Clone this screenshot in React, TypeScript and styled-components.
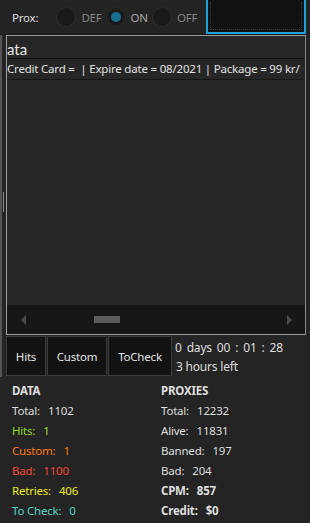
import React from 'react'
import styled, { createGlobalStyle } from 'styled-components'

const GlobalStyle = createGlobalStyle`
  html, body {
    margin: 0;
    padding: 0;
    background: #242424;
  }
  body {
    font-family: 'Noto Sans', 'Open Sans', sans-serif;
    letter-spacing: -0.2px;
    color: #dcdcdc;
  }
`

type Stat = { label: string; value: string; color?: string; bold?: boolean }

const dataStats: Stat[] = [
  { label: 'Total:', value: '1102' },
  { label: 'Hits:', value: '1', color: '#8fdc2a' },
  { label: 'Custom:', value: '1', color: '#ff7a14' },
  { label: 'Bad:', value: '1100', color: '#f2493a' },
  { label: 'Retries:', value: '406', color: '#eaea1c' },
  { label: 'To Check:', value: '0', color: '#52d6c2' },
]

const proxyStats: Stat[] = [
  { label: 'Total:', value: '12232' },
  { label: 'Alive:', value: '11831' },
  { label: 'Banned:', value: '197' },
  { label: 'Bad:', value: '204' },
  { label: 'CPM:', value: '857', bold: true },
  { label: 'Credit:', value: '$0', bold: true },
]

const radios = [
  { label: 'DEF', checked: false },
  { label: 'ON', checked: true },
  { label: 'OFF', checked: false },
]

const App: React.FC = () => {
  const renderStats = (title: string, stats: Stat[]) => (
    <StatColumn>
      <StatTitle>{title}</StatTitle>
      {stats.map((s) => (
        <StatRow key={s.label} color={s.color} $bold={s.bold}>
          <span>{s.label}</span>
          <span>{s.value}</span>
        </StatRow>
      ))}
    </StatColumn>
  )

  return (
    <Window>
      <GlobalStyle />
      <TopBar>
        <ProxLabel>Prox:</ProxLabel>
        <RadioGroup>
          {radios.map((r) => (
            <Radio key={r.label} $checked={r.checked}>
              <RadioCircle $checked={r.checked} />
              <span>{r.label}</span>
            </Radio>
          ))}
        </RadioGroup>
        <FocusBox>
          <FocusDots />
        </FocusBox>
      </TopBar>

      <Middle>
        <Splitter>
          <SplitterHandle />
        </Splitter>
        <MainColumn>
          <ListBox>
            <ListHeader>ata</ListHeader>
            <ListRow>Credit Card =&nbsp; | Expire date = 08/2021 | Package = 99 kr/</ListRow>
            <ListBody />
            <HScroll>
              <ArrowLeft />
              <Thumb />
              <ArrowRight />
            </HScroll>
          </ListBox>
          <ButtonRow>
            <TabButton $w={40}>Hits</TabButton>
            <TabButton $w={60}>Custom</TabButton>
            <TabButton $w={64}>ToCheck</TabButton>
            <Timer>
              <TimeLine>
                <span>0</span>
                <span>days</span>
                <span>00</span>
                <span>:</span>
                <span>01</span>
                <span>:</span>
                <span>28</span>
              </TimeLine>
              <Left>3 hours left</Left>
            </Timer>
          </ButtonRow>
        </MainColumn>
      </Middle>

      <Stats>
        {renderStats('DATA', dataStats)}
        {renderStats('PROXIES', proxyStats)}
      </Stats>
    </Window>
  )
}

export default App

const Window = styled.div`
  width: 310px;
  height: 523px;
  display: flex;
  flex-direction: column;
  overflow: hidden;
  background: #242424;
`

const TopBar = styled.div`
  height: 35px;
  display: flex;
  align-items: stretch;
  background: #232323;
  border-bottom: 1px solid #1a1a1a;
  box-sizing: border-box;
`

const ProxLabel = styled.span`
  font-size: 11.5px;
  color: #dedede;
  align-self: center;
  margin: 0 18px 0 12px;
`

const RadioGroup = styled.div`
  display: flex;
  align-items: center;
  gap: 4px;
  flex: 1;
`

const Radio = styled.div<{ $checked: boolean }>`
  display: flex;
  align-items: center;
  gap: 5px;
  font-size: 11.5px;
  color: ${(p) => (p.$checked ? '#a8a8a8' : '#858585')};
`

const RadioCircle = styled.span<{ $checked: boolean }>`
  width: 20px;
  height: 20px;
  border-radius: 50%;
  background: #1a1a1a;
  border: 1px solid #2c2c2c;
  box-sizing: border-box;
  display: flex;
  align-items: center;
  justify-content: center;
  &::after {
    content: '';
    width: 10px;
    height: 10px;
    border-radius: 50%;
    background: #17708f;
    display: ${(p) => (p.$checked ? 'block' : 'none')};
  }
`

const FocusBox = styled.div`
  width: 100px;
  margin-right: 4px;
  background: #121212;
  border: 2px solid #1ea0da;
  border-top: none;
  box-sizing: border-box;
  padding: 2px;
  display: flex;
`

const FocusDots = styled.div`
  flex: 1;
  border: 1px dotted #3a3a3a;
  border-top: none;
`

const Middle = styled.div`
  display: flex;
  height: 342px;
`

const Splitter = styled.div`
  width: 6px;
  border-left: 2px solid #555;
  box-sizing: border-box;
  display: flex;
  align-items: center;
  padding-left: 1px;
`

const SplitterHandle = styled.div`
  width: 1px;
  height: 20px;
  margin-top: -8px;
  background: #8a8a8a;
`

const MainColumn = styled.div`
  width: 300px;
  display: flex;
  flex-direction: column;
`

const ListBox = styled.div`
  height: 300px;
  border: 1px solid #9c9c9c;
  border-right-color: #8a8a8a;
  box-sizing: border-box;
  display: flex;
  flex-direction: column;
  background: #262626;
  overflow: hidden;
`

const ListHeader = styled.div`
  height: 23px;
  padding-top: 2px;
  box-sizing: border-box;
  font-family: 'Lato', sans-serif;
  letter-spacing: 0;
  font-size: 15px;
  line-height: 23px;
  color: #e6e6e6;
  border-bottom: 1px solid #121212;
`

const ListRow = styled.div`
  height: 21px;
  font-size: 11.5px;
  line-height: 20px;
  white-space: nowrap;
  color: #e2e2e2;
  border-bottom: 1px solid #161616;
  box-sizing: border-box;
`

const ListBody = styled.div`
  flex: 1;
`

const HScroll = styled.div`
  height: 29px;
  background: #161616;
  display: flex;
  align-items: center;
  padding: 0 13px 0 14px;
`

const ArrowLeft = styled.span`
  width: 0;
  height: 0;
  border-top: 5px solid transparent;
  border-bottom: 5px solid transparent;
  border-right: 5px solid #4a4a4a;
`

const ArrowRight = styled.span`
  width: 0;
  height: 0;
  margin-left: auto;
  border-top: 5px solid transparent;
  border-bottom: 5px solid transparent;
  border-left: 5px solid #4a4a4a;
`

const Thumb = styled.span`
  width: 26px;
  height: 7px;
  margin-left: 68px;
  background: #5c5c5c;
`

const ButtonRow = styled.div`
  display: flex;
  gap: 1px;
  height: 41px;
  padding-top: 1px;
  box-sizing: border-box;
`

const TabButton = styled.button<{ $w: number }>`
  width: ${(p) => p.$w}px;
  background: #121212;
  border: 1px solid #3a3a3a;
  color: #e4e4e4;
  font-family: 'Noto Sans', sans-serif;
  letter-spacing: -0.2px;
  font-size: 11.5px;
  padding: 0;
  margin: 0;
`

const Timer = styled.div`
  display: flex;
  flex-direction: column;
  padding: 2px 0 0 2px;
  font-size: 12px;
  color: #dedede;
`

const TimeLine = styled.div`
  display: flex;
  gap: 5px;
  height: 19px;
  line-height: 19px;
`

const Left = styled.div`
  line-height: 19px;
  padding-left: 1px;
`

const Stats = styled.div`
  display: flex;
  padding: 4px 0 0 12px;
`

const StatColumn = styled.div`
  width: 149px;
  display: flex;
  flex-direction: column;
`

const StatTitle = styled.div`
  font-size: 11.5px;
  font-weight: 700;
  line-height: 20px;
  color: #dedede;
`

const StatRow = styled.div<{ color?: string; $bold?: boolean }>`
  display: flex;
  gap: 8px;
  font-size: 11.5px;
  line-height: 20px;
  color: ${(p) => p.color || '#dedede'};
  font-weight: ${(p) => (p.$bold ? 700 : 400)};
`
